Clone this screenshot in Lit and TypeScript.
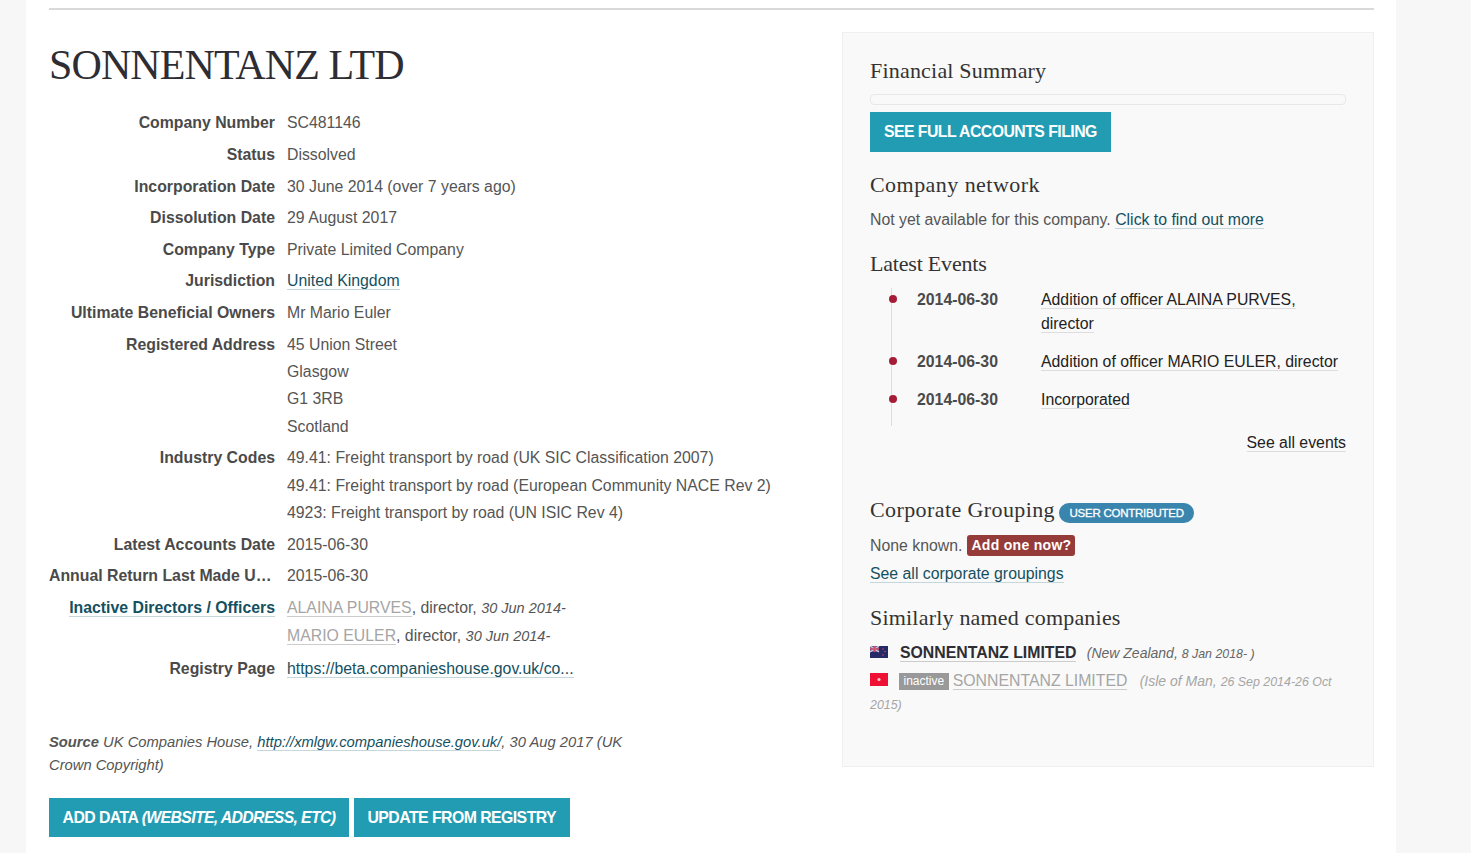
import { LitElement, html, css } from "lit";
import { customElement } from "lit/decorators.js";

@customElement("app-root")
export class AppRoot extends LitElement {
  static styles = css`
    :host { display: block; height: 853px; overflow: hidden; background: #f7f7f7; font-family: "Liberation Sans", Arial, sans-serif; font-size: 15.84px; color: #555; line-height: 27.4px; }
    * { box-sizing: border-box; }
    a { text-decoration: none; color: #14505f; border-bottom: 1px solid #c5d6dc; }
    .page { margin-left: 26px; width: 1370px; height: 853px; background: #fff; padding: 8px 22px 0 23px; }
    .rule { height: 2px; background: #d9d9d9; }
    .cols { display: flex; }
    .left { width: 793px; flex: none; }
    h1 { margin: 31px 0 0; font: 400 42px/48px "Liberation Serif", serif; color: #2d2d33; letter-spacing: -0.9px; }
    .rows { margin-top: 18.4px; }
    .row { display: flex; gap: 12px; padding: 2.1px 0; }
    .k { width: 226px; flex: none; text-align: right; font-weight: 700; color: #4a4a4a; white-space: nowrap; overflow: hidden; text-overflow: ellipsis; }
    .k a { color: #14505f; }
    .v { flex: 1; }
    .v div { white-space: nowrap; }
    .muted { color: #a5a5a5; border-bottom-color: #ccc; }
    .date { font-style: italic; font-size: 14.5px; color: #555; }
    .source { margin-top: 46.1px; width: 590px; font-style: italic; color: #555; line-height: 23px; font-size: 14.75px; }
    .source b { font-weight: 700; }
    .buttons { display: flex; gap: 5px; margin-top: 21px; }
    .btn { display: inline-block; background: #229cb2; color: #fff; font-weight: 700; font-size: 15.84px; letter-spacing: -0.55px; line-height: 39px; padding: 0 13.5px; text-transform: uppercase; white-space: nowrap; border: 0; }
    .btn i { letter-spacing: -0.65px; }
    .btn.tall { line-height: 40px; padding: 0 14px; }
    .panel { margin-top: 22px; width: 532px; height: 735px; background: #f9f9f9; border: 1px solid #efefef; padding: 0 27px; }
    h2 { margin: 0; font: 400 22px/30px "Liberation Serif", serif; color: #333; letter-spacing: 0.2px; }
    .fin { margin-top: 23px; }
    .bar { margin: 8px 0 7px; width: 476px; height: 11px; background: #f9f9f9; border: 1px solid #e8e8e8; border-radius: 4px; }
    .net { margin-top: 18px; letter-spacing: 0.45px; }
    .p { margin-top: 6px; color: #555; }
    .ev { margin-top: 16px; letter-spacing: -0.2px; }
    .tl { list-style: none; margin: 9px 0 0 21px; padding: 0; border-left: 1px solid #ddd; width: 455px; }
    .tl li { position: relative; display: flex; padding: 0 0 14px 25px; line-height: 24px; }
    .tl li::before { content: ""; position: absolute; left: -3.5px; top: 7px; width: 8px; height: 8px; border-radius: 50%; background: #a51c36; }
    .tl b { width: 124px; flex: none; color: #4a4a4a; }
    .tl a { color: #222; border-bottom-color: #ddd; }
    .all { text-align: right; width: 476px; margin-top: 2.8px; }
    .all a { color: #222; border-bottom-color: #ddd; }
    .grp { margin-top: 38px; display: flex; align-items: center; gap: 4px; }
    .grp h2 { letter-spacing: 0.4px; }
    .badge { background: #3a85ad; color: #fff; font-size: 11.5px; letter-spacing: -0.25px; line-height: 20px; height: 20px; border-radius: 10px; padding: 0 10.5px; margin-top: 7px; -webkit-text-stroke: 0.3px #fff; }
    .none { margin-top: 9px; display: flex; align-items: center; gap: 5px; line-height: 24px; }
    .add { background: #953b39; color: #fff; font-weight: 700; font-size: 14px; letter-spacing: 0.3px; line-height: 21px; height: 21px; padding: 0 4px; border-radius: 3px; }
    .seeg { line-height: 27px; margin-top: 2px; }
    .sim { margin-top: 16px; }
    .co { margin-top: 6px; line-height: 28px; width: 476px; }
    .co2 { line-height: 22px; margin-top: 2px; color: #a5a5a5; }
    .flag { display: inline-block; width: 18px; height: 12px; margin-right: 12px; vertical-align: 0; }
    .flag.im { height: 13px; margin-right: 11px; vertical-align: 0; }
    .co b { color: #2d2d33; }
    .co a { color: #2d2d33; border-bottom-color: #ccc; }
    .d { font-style: italic; font-size: 14px; margin-left: 2px; color: #666; }
    .d small { font-size: 12.4px; }
    .co2 .d { color: #a5a5a5; margin-left: 4px; }
    .co2 a { color: #a5a5a5; }
    .lab { display: inline-block; background: #999; color: #fff; font-size: 12px; line-height: 17px; padding: 0 4.5px; margin-right: 4px; vertical-align: 1px; }
  `;

  row(k: unknown, v: unknown) {
    return html`<div class="row"><div class="k">${k}</div><div class="v">${v}</div></div>`;
  }

  render() {
    return html`<div class="page">
      <div class="rule"></div>
      <div class="cols">
        <div class="left">
          <h1>SONNENTANZ LTD</h1>
          <div class="rows">
            ${this.row("Company Number", "SC481146")}
            ${this.row("Status", "Dissolved")}
            ${this.row("Incorporation Date", "30 June 2014 (over 7 years ago)")}
            ${this.row("Dissolution Date", "29 August 2017")}
            ${this.row("Company Type", "Private Limited Company")}
            ${this.row("Jurisdiction", html`<a href="#">United Kingdom</a>`)}
            ${this.row("Ultimate Beneficial Owners", "Mr Mario Euler")}
            ${this.row("Registered Address", html`<div>45 Union Street</div><div>Glasgow</div><div>G1 3RB</div><div>Scotland</div>`)}
            ${this.row("Industry Codes", html`<div>49.41: Freight transport by road (UK SIC Classification 2007)</div><div>49.41: Freight transport by road (European Community NACE Rev 2)</div><div>4923: Freight transport by road (UN ISIC Rev 4)</div>`)}
            ${this.row("Latest Accounts Date", "2015-06-30")}
            ${this.row("Annual Return Last Made Up To", "2015-06-30")}
            ${this.row(html`<a href="#">Inactive Directors / Officers</a>`, html`<div><a class="muted" href="#">ALAINA PURVES</a>, director, <span class="date">30 Jun 2014-</span></div><div><a class="muted" href="#">MARIO EULER</a>, director, <span class="date">30 Jun 2014-</span></div>`)}
            ${this.row("Registry Page", html`<a href="#">https://beta.companieshouse.gov.uk/co...</a>`)}
          </div>
          <div class="source"><b>Source</b> UK Companies House, <a href="#">http://xmlgw.companieshouse.gov.uk/</a>, 30 Aug 2017 (UK Crown Copyright)</div>
          <div class="buttons">
            <a class="btn" href="#">Add data <i>(website, address, etc)</i></a>
            <a class="btn" href="#">Update from registry</a>
          </div>
        </div>
        <div class="panel">
          <h2 class="fin">Financial Summary</h2>
          <div class="bar"></div>
          <a class="btn tall" href="#">See full accounts filing</a>
          <h2 class="net">Company network</h2>
          <div class="p">Not yet available for this company. <a href="#">Click to find out more</a></div>
          <h2 class="ev">Latest Events</h2>
          <ul class="tl">
            <li><b>2014-06-30</b><span><a href="#">Addition of officer ALAINA PURVES,</a><br /><a href="#">director</a></span></li>
            <li><b>2014-06-30</b><span><a href="#">Addition of officer MARIO EULER, director</a></span></li>
            <li><b>2014-06-30</b><span><a href="#">Incorporated</a></span></li>
          </ul>
          <div class="all"><a href="#">See all events</a></div>
          <div class="grp"><h2>Corporate Grouping</h2><span class="badge">USER CONTRIBUTED</span></div>
          <div class="none"><span>None known.</span><span class="add">Add one now?</span></div>
          <div class="seeg"><a href="#">See all corporate groupings</a></div>
          <h2 class="sim">Similarly named companies</h2>
          <div class="co">
            <svg class="flag" viewBox="0 0 18 12"><rect width="18" height="12" fill="#232a66"/><rect width="9" height="6" fill="#6a5f95"/><path d="M0 0l9 6M9 0L0 6" stroke="#d8c8dc" stroke-width="1.2"/><path d="M4.5 0v6M0 3h9" stroke="#c8506a" stroke-width="1.4"/><circle cx="13" cy="3" r=".8" fill="#d04a5e"/><circle cx="15" cy="5.5" r=".8" fill="#d04a5e"/><circle cx="13" cy="9" r=".8" fill="#d04a5e"/></svg><b><a href="#">SONNENTANZ LIMITED</a></b>
            <span class="d">&nbsp;(New Zealand, <small>8 Jan 2018- )</small></span>
          </div>
          <div class="co co2">
            <svg class="flag im" viewBox="0 0 18 13"><rect width="18" height="13" fill="#ee1133"/><circle cx="9" cy="6.5" r="1.6" fill="#f8c8c8"/></svg><span class="lab">inactive</span><a href="#">SONNENTANZ LIMITED</a>
            <span class="d">&nbsp;(Isle of Man, <small>26 Sep 2014-26 Oct 2015)</small></span>
          </div>
        </div>
      </div>
    </div>`;
  }
}
